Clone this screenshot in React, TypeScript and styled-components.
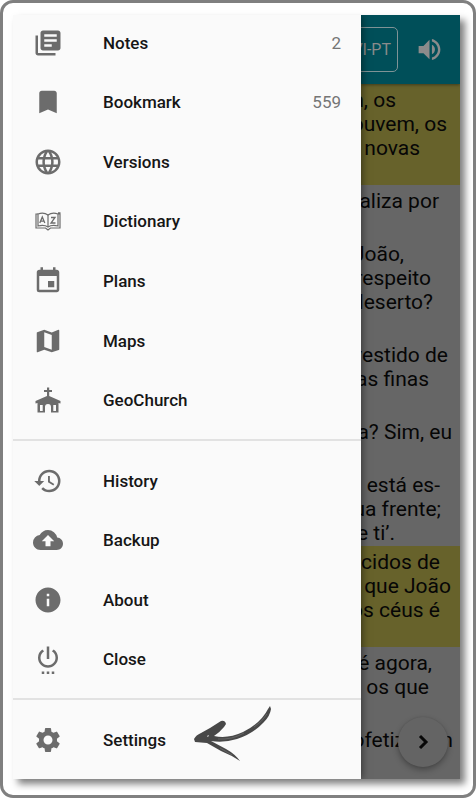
import React from "react";
import styled, { createGlobalStyle } from "styled-components";
import {
  MdBackup,
  MdBookmark,
  MdEvent,
  MdHistory,
  MdInfo,
  MdLanguage,
  MdLibraryBooks,
  MdMap,
  MdSettings,
  MdSettingsPower,
  MdVolumeUp,
} from "react-icons/md";

const GlobalStyle = createGlobalStyle`
  *, *::before, *::after { box-sizing: border-box; }
  body { margin: 0; background: #fff; font-family: Roboto, "Liberation Sans", sans-serif; }
  button { font: inherit; }
`;

const Frame = styled.div`
  display: flex;
  min-height: 100vh;
  padding: 12px 13px 16px 10px;
  border: 3px solid #808080;
  border-radius: 13px;
  background: #fff;
`;

const Screen = styled.div`
  flex: 1;
  display: grid;
  grid-template-columns: minmax(0, 1fr) 99px;
  min-width: 0;
  box-shadow: 5px 5px 7px rgba(0, 0, 0, 0.5);
`;

const Drawer = styled.nav`
  position: relative;
  z-index: 1;
  overflow: hidden;
  background: #fafafa;
  box-shadow: 1px 0 8px rgba(0, 0, 0, 0.5);
  clip-path: inset(0 -20px 0 0);
`;

const Group = styled.ul<{ $height: number; $first?: boolean }>`
  display: grid;
  grid-auto-rows: 1fr;
  height: ${(p) => p.$height}px;
  margin: ${(p) => (p.$first ? "-2px" : "0")} 0 0;
  padding: 0;
  list-style: none;
`;

const Divider = styled.hr`
  height: 2px;
  margin: 9px 0 10px;
  border: 0;
  background: #e2e2e2;
`;

const Item = styled.li`
  display: flex;
`;

const ItemButton = styled.button`
  flex: 1;
  display: grid;
  grid-template-columns: 30px minmax(0, 1fr) auto;
  column-gap: 40px;
  align-items: center;
  padding: 0 20px;
  border: 0;
  background: transparent;
  color: #161616;
  font-size: 17px;
  font-weight: 500;
  line-height: 20px;
  text-align: left;
  cursor: pointer;
`;

const IconBox = styled.span`
  display: flex;
  color: #6c6c6c;
  svg { width: 30px; height: 30px; }
`;

const Label = styled.span`
  display: flex;
  align-items: center;
  gap: 28px;
`;

const Count = styled.span`
  color: #757575;
  font-weight: 400;
`;

const ArrowMark = styled.svg`
  width: 78px;
  height: 70px;
  margin: -10px 0;
`;

const Reader = styled.main`
  position: relative;
  display: flex;
  flex-direction: column;
  min-width: 0;
  overflow: hidden;
  background: #666;
`;

const Toolbar = styled.header`
  display: flex;
  align-items: center;
  justify-content: flex-end;
  gap: 17px;
  height: 69px;
  padding-right: 16px;
  background: #004f59;
  color: #8b8b8b;
  box-shadow: 0 1px 3px rgba(0, 0, 0, 0.4);
  z-index: 0;
  position: relative;
`;

const VersionButton = styled.button`
  flex: none;
  height: 45px;
  padding: 0 6px;
  border: 1px solid #7f9396;
  border-radius: 5px;
  background: transparent;
  color: inherit;
  font-size: 16px;
`;

const SoundButton = styled.button`
  display: flex;
  flex: none;
  padding: 0;
  border: 0;
  background: transparent;
  color: #8b8b8b;
  svg { width: 29px; height: 29px; }
`;

const Verse = styled.p<{ $marked?: boolean; $lines: number }>`
  min-height: ${(p) => p.$lines * 24 + 5}px;
  margin: 0;
  padding: 4px 0 1px;
  background: ${(p) => (p.$marked ? "#67622b" : "transparent")};
  color: #060606;
  font-size: 21px;
  line-height: 24px;
`;

const Line = styled.span<{ $end: number }>`
  display: flex;
  justify-content: flex-end;
  padding-right: ${(p) => p.$end}px;
  white-space: pre;
`;

const NextButton = styled.button`
  position: absolute;
  right: 12px;
  bottom: 12px;
  display: flex;
  align-items: center;
  justify-content: center;
  width: 50px;
  height: 50px;
  padding: 0;
  border: 0;
  border-radius: 50%;
  background: #646464;
  color: #080808;
  box-shadow: 0 3px 6px rgba(0, 0, 0, 0.3), 0 0 2px rgba(0, 0, 0, 0.12);
`;

function DictionaryIcon() {
  return (
    <svg viewBox="0 0 30 30" fill="none" stroke="currentColor" strokeWidth="1.2">
      <path d="M15 9C12 6.800 8 6.800 5 8V20C9 19 12 19 15 21C18 19 21 19 25 20V8C22 6.800 18 6.800 15 9Z" />
      <path d="M15 9V21M5 8H3V22H12.500L15 24L17.500 22H27V8H25M25 6.800H27.500" />
      <path d="M6.800 17L9.300 11L11.800 17M7.700 15.200H11M18 11.500H22L18 17H22.500" strokeWidth="1.300" />
    </svg>
  );
}

function ChurchIcon() {
  return (
    <svg viewBox="0 0 30 30">
      <path fill="currentColor" d="M14 2.500H16.200V5H19V7H16.200V11L27.500 16V18.500L25.500 17.900V27.500H18V22A3 3 0 0 0 12 22V27.500H4.500V17.900L2.500 18.500V16L14 11V7H11V5H14Z" />
      <path fill="#fafafa" d="M7 20H9.700V26H7ZM20.300 20H23V26H20.300ZM13.300 27.500V22A1.700 1.700 0 0 1 16.700 22V27.500Z" />
    </svg>
  );
}

function HandDrawnArrow() {
  return (
    <ArrowMark viewBox="0 0 78 70" aria-hidden="true">
      <path
        fill="#484848"
        d="M0 34Q2 30 7 28L16 23L27 16Q31 15 32 19L30 22Q26 27 20 31Q34 34 49 27Q67 18 74 4L76 1L77 4Q76 11 70 17Q59 29 43 34Q30 38 17 36L32 44Q41 49 46 56Q37 50 27 46L13 38L1 37Z"
      />
      <path d="M13 31L15 30L14 32Z" fill="#fafafa" />
      <path d="M24 34Q38 35 50 28M60 22Q68 17 73 9M26 43L38 50" fill="none" stroke="#777" strokeWidth="0.6" />
    </ArrowMark>
  );
}

type Entry = { label: string; icon: React.ReactNode; count?: number; pointed?: boolean };

const library: Entry[] = [
  { label: "Notes", icon: <MdLibraryBooks />, count: 2 },
  { label: "Bookmark", icon: <MdBookmark />, count: 559 },
  { label: "Versions", icon: <MdLanguage /> },
  { label: "Dictionary", icon: <DictionaryIcon /> },
  { label: "Plans", icon: <MdEvent /> },
  { label: "Maps", icon: <MdMap /> },
  { label: "GeoChurch", icon: <ChurchIcon /> },
];

const system: Entry[] = [
  { label: "History", icon: <MdHistory /> },
  { label: "Backup", icon: <MdBackup /> },
  { label: "About", icon: <MdInfo /> },
  { label: "Close", icon: <MdSettingsPower /> },
];

const preferences: Entry[] = [{ label: "Settings", icon: <MdSettings />, pointed: true }];

type VerseData = { lines: number; marked?: boolean; text: [string, number][] };

const verses: VerseData[] = [
  { lines: 4, marked: true, text: [["m, os", 64], ["ouvem, os", 13], ["novas", 40]] },
  { lines: 2, text: [["aliza por", 21]] },
  { lines: 4, text: [["João,", 56], ["respeito", 29], ["deserto?", 27]] },
  { lines: 3, text: [["vestido de", 12], ["as finas", 31]] },
  { lines: 2, text: [["a? Sim, eu", 8]] },
  { lines: 3, text: [["está es-", 20], ["ua frente;", 19], ["e ti’.", 65]] },
  { lines: 4, marked: true, text: [["cidos de", 20], ["que João", 9], ["os céus é", 20]] },
  { lines: 3, text: [["é agora,", 28], ["os que", 31]] },
  { lines: 2, text: [["ofetizaram", 7]] },
];

function MenuGroup({ entries, height, first }: { entries: Entry[]; height: number; first?: boolean }) {
  return (
    <Group $height={height} $first={first}>
      {entries.map((entry) => (
        <Item key={entry.label}>
          <ItemButton type="button">
            <IconBox>{entry.icon}</IconBox>
            <Label>
              {entry.label}
              {entry.pointed && <HandDrawnArrow />}
            </Label>
            {entry.count !== undefined && <Count>{entry.count}</Count>}
          </ItemButton>
        </Item>
      ))}
    </Group>
  );
}

export default function App() {
  return (
    <>
      <GlobalStyle />
      <Frame>
        <Screen>
          <Drawer aria-label="Main menu">
            <MenuGroup entries={library} height={417} first />
            <Divider />
            <MenuGroup entries={system} height={238} />
            <Divider />
            <MenuGroup entries={preferences} height={60} />
          </Drawer>
          <Reader>
            <Toolbar>
              <VersionButton type="button">NVI-PT</VersionButton>
              <SoundButton type="button" aria-label="Listen">
                <MdVolumeUp />
              </SoundButton>
            </Toolbar>
            {verses.map((verse, i) => (
              <Verse key={i} $lines={verse.lines} $marked={verse.marked}>
                {verse.text.map(([text, end]) => (
                  <Line key={text} $end={end}>
                    {text}
                  </Line>
                ))}
              </Verse>
            ))}
            <NextButton type="button" aria-label="Next chapter">
              <svg width="30" height="30" viewBox="0 0 30 30" fill="none" stroke="currentColor" strokeWidth="3">
                <path d="M12 9L18 15L12 21" />
              </svg>
            </NextButton>
          </Reader>
        </Screen>
      </Frame>
    </>
  );
}
